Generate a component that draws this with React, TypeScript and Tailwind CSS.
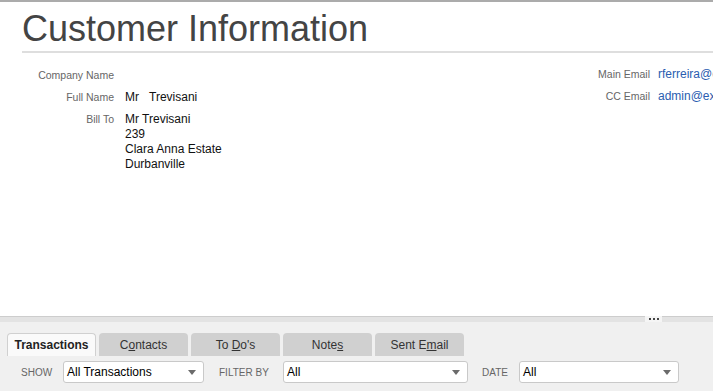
const leftRows = [
  { label: "Company Name", lines: [] as string[] },
  { label: "Full Name", lines: ["Mr\u00a0\u00a0\u00a0Trevisani"] },
  { label: "Bill To", lines: ["Mr Trevisani", "239", "Clara Anna Estate", "Durbanville"] },
];

const rightRows = [
  { label: "Main Email", value: "rferreira@example.co.za" },
  { label: "CC Email", value: "admin@example.co.za" },
];

function Arrow() {
  return (
    <svg width="8" height="5" viewBox="0 0 8 5" className="shrink-0">
      <polygon points="0,0 8,0 4,5" fill="#6b6b6b" />
    </svg>
  );
}

function Select({ value, width }: { value: string; width: string }) {
  return (
    <div
      className={`${width} h-[22px] flex items-center justify-between bg-white border border-[#c9c9c9] rounded-[3px] pl-[3px] pr-[7px] text-[12px] normal-case text-black`}
    >
      <span>{value}</span>
      <Arrow />
    </div>
  );
}

function Tab({ children, active }: { children: React.ReactNode; active?: boolean }) {
  return (
    <div
      className={
        active
          ? "w-[89px] h-[23px] flex items-center justify-center rounded-t-[4px] bg-[#fafafa] border border-b-0 border-[#d0d0d0] text-[12px] font-bold text-[#222]"
          : "w-[89px] h-[23px] flex items-center justify-center rounded-t-[4px] bg-[#d0d0d0] text-[12px] text-[#333]"
      }
    >
      {children}
    </div>
  );
}

export default function App() {
  return (
    <div
      className="w-[713px] h-[391px] overflow-hidden flex flex-col bg-white border-t-2 border-[#ababab]"
      style={{ fontFamily: '"Liberation Sans", Arial, sans-serif' }}
    >
      {/* Header */}
      <div className="ml-[22px] pt-[9px] pb-[4px] border-b-2 border-[#dedede]">
        <h1 className="text-[36px] leading-none text-[#444]">Customer Information</h1>
      </div>

      {/* Details */}
      <div className="flex-1 flex mt-[15px]">
        <div className="grid grid-cols-[114px_auto] gap-x-[11px] gap-y-[7px] content-start leading-[15px]">
          {leftRows.map((row) => (
            <div key={row.label} className="contents">
              <div className="text-right text-[10.5px] text-[#666]">{row.label}</div>
              <div className="text-[12px] text-[#111] min-h-[15px]">
                {row.lines.map((l) => (
                  <div key={l}>{l}</div>
                ))}
              </div>
            </div>
          ))}
        </div>
        <div className="flex-1" />
        <div className="w-[135px] grid grid-cols-[72px_55px] gap-x-[8px] gap-y-[7px] content-start leading-[15px] -mt-[1px]">
          {rightRows.map((row) => (
            <div key={row.label} className="contents">
              <div className="text-right text-[10.5px] text-[#666] whitespace-nowrap">{row.label}</div>
              <div className="text-[12px] text-[#2a5db0] whitespace-nowrap overflow-hidden">{row.value}</div>
            </div>
          ))}
        </div>
      </div>

      {/* Splitter */}
      <div className="h-[6px] bg-[#e3e3e3] border-t border-[#cdcdcd] flex justify-end pr-[51px]">
        <div className="w-[17px] -mt-px bg-[#f5f5f5] flex items-center justify-center gap-[2px]">
          <span className="w-[2px] h-[2px] bg-[#444]" />
          <span className="w-[2px] h-[2px] bg-[#444]" />
          <span className="w-[2px] h-[2px] bg-[#444]" />
        </div>
      </div>

      {/* Bottom panel */}
      <div className="h-[69px] bg-[#f0f0f0] pt-[11px]">
        <div className="flex gap-[3px] pl-[7px]">
          <Tab active>Transactions</Tab>
          <Tab>
            C<span className="underline">o</span>ntacts
          </Tab>
          <Tab>
            To&nbsp;<span className="underline">D</span>o's
          </Tab>
          <Tab>
            Note<span className="underline">s</span>
          </Tab>
          <Tab>
            Sent E<span className="underline">m</span>ail
          </Tab>
        </div>
        <div className="flex items-center mt-[5px] text-[10px] text-[#666]">
          <span className="ml-[21px] w-[42px]">SHOW</span>
          <Select value="All Transactions" width="w-[141px]" />
          <span className="ml-[15px] w-[64px]">FILTER BY</span>
          <Select value="All" width="w-[185px]" />
          <span className="ml-[14px] w-[37px]">DATE</span>
          <Select value="All" width="w-[160px]" />
        </div>
      </div>
    </div>
  );
}
